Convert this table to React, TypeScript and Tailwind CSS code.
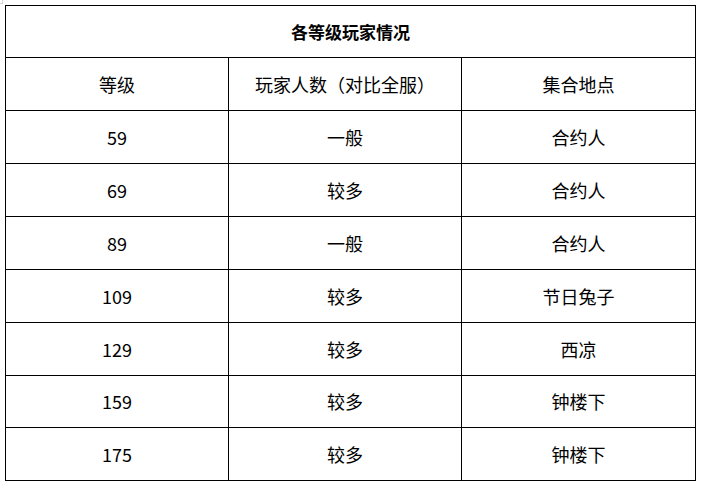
const rows = [
  { level: "59", count: "一般", place: "合约人" },
  { level: "69", count: "较多", place: "合约人" },
  { level: "89", count: "一般", place: "合约人" },
  { level: "109", count: "较多", place: "节日兔子" },
  { level: "129", count: "较多", place: "西凉" },
  { level: "159", count: "较多", place: "钟楼下" },
  { level: "175", count: "较多", place: "钟楼下", last: true },
];

function Cell({ children, tall }: { children: React.ReactNode; tall?: boolean }) {
  return (
    <div
      className={`flex items-center justify-center bg-white ${tall ? "h-[51px]" : "h-[52px]"}`}
    >
      {children}
    </div>
  );
}

export default function App() {
  return (
    <div
      className="relative min-h-[485px] w-[702px] bg-white pl-[5px] pt-[5px] text-[18px] text-black"
      style={{ fontFamily: '"Noto Sans CJK SC", "Noto Sans", sans-serif' }}
    >
      {/* word-style corner mark */}
      <div className="absolute left-0 top-0 h-[4px] w-[3px] border-b border-r border-gray-300" />

      <div className="grid w-[691px] grid-cols-[222px_232px_233px] gap-px bg-black p-px">
        <div className="col-span-3 flex h-[51px] items-center justify-center bg-white text-[17px] font-bold">
          各等级玩家情况
        </div>
        <Cell>等级</Cell>
        <Cell>玩家人数（对比全服）</Cell>
        <Cell>集合地点</Cell>
        {rows.map((r, i) => (
          <div key={r.level} className="contents">
            <Cell tall={i === 5}>{r.level}</Cell>
            <Cell tall={i === 5}>{r.count}</Cell>
            <Cell tall={i === 5}>{r.place}</Cell>
          </div>
        ))}
      </div>
    </div>
  );
}
